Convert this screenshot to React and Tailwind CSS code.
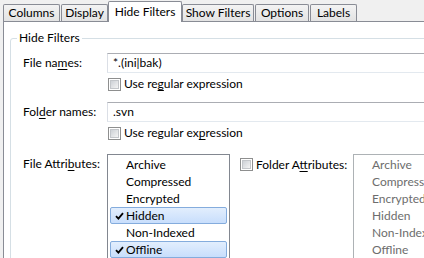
import React from "react";

const tabs = [
	{ name: "Columns", w: "w-[57px]" },
	{ name: "Display", w: "w-[47px]" },
	{ name: "Hide Filters", w: "w-[74px]", active: true },
	{ name: "Show Filters", w: "w-[72px]" },
	{ name: "Options", w: "w-[54px]" },
	{ name: "Labels", w: "w-[47px]" },
];

const attributes = ["Archive", "Compressed", "Encrypted", "Hidden", "Non-Indexed", "Offline"];
const hiddenChecked = ["Hidden", "Offline"];

// Win7 style unchecked checkbox
const CheckBox = () => (
	<div className="w-[13px] h-[13px] border border-[#8e8f8f] bg-white p-[1px] shrink-0">
		<div className="w-full h-full border border-[#c3c6ca] bg-linear-to-br from-[#cdd1d6] to-[#f4f4f4]"></div>
	</div>
);

// label with an underlined access key
const Label = ({ pre, key_, post }) => (
	<span className="whitespace-nowrap">
		{pre}
		<span className="underline underline-offset-2">{key_}</span>
		{post}
	</span>
);

const TextBox = ({ value }) => (
	<div className="w-[330px] h-[20px] border border-[#abadb3] border-l-[#dbdfe6] border-r-[#dbdfe6] border-b-[#e3e9ef] pl-[5px] flex items-center">
		{value}
	</div>
);

const Tick = () => (
	<svg width="9" height="8" viewBox="0 0 9 8" className="shrink-0">
		<path d="M1 4.2 L3.4 6.6 L8 1.2" fill="none" stroke="#000" strokeWidth="1.8" />
	</svg>
);

export default function App() {
	return (
		<div
			className="w-[424px] h-[258px] overflow-hidden bg-[#f0f0f0] text-[12px] text-black flex flex-col"
			style={{ fontFamily: 'Lato, "Noto Sans", sans-serif' }}
		>
			{/* Tab strip */}
			<div className="h-[21px] flex items-end pl-[3px] gap-[1px] shrink-0">
				{tabs.map((t) =>
					t.active ? (
						<div
							key={t.name}
							className={`${t.w} h-[21px] -mb-px relative z-10 bg-white border border-b-0 border-[#898c95] rounded-t-[2px] flex items-start justify-center pt-[2px] leading-[16px] -mx-[1px]`}
						>
							{t.name}
						</div>
					) : (
						<div
							key={t.name}
							className={`${t.w} h-[17px] border border-b-0 border-[#898c95] rounded-t-[2px] bg-linear-to-b from-[#f3f3f3] to-[#e3e3e3] flex items-center justify-center leading-[16px]`}
						>
							{t.name}
						</div>
					)
				)}
			</div>

			{/* Tab panel */}
			<div className="ml-[3px] flex-1 border border-[#898c95] bg-white pl-[6px] pt-[8px] w-[460px]">
				<fieldset className="w-[470px] h-[300px] border border-[#d5dfe5] rounded-[3px] pl-[12px] pt-[7px]">
					<legend className="-ml-[6px] px-[2px] leading-[16px]">Hide Filters</legend>

					<div className="flex items-center h-[20px]">
						<div className="w-[84px]">
							<Label pre="File na" key_="m" post="es:" />
						</div>
						<TextBox value="*.(ini|bak)" />
					</div>

					<div className="flex items-center gap-[3px] h-[14px] mt-[4px] pl-[85px]">
						<CheckBox />
						<Label pre="Use re" key_="g" post="ular expression" />
					</div>

					<div className="flex items-center h-[20px] mt-[11px]">
						<div className="w-[84px]">
							<Label pre="Fol" key_="d" post="er names:" />
						</div>
						<TextBox value=".svn" />
					</div>

					<div className="flex items-center gap-[3px] h-[14px] mt-[4px] pl-[85px]">
						<CheckBox />
						<Label pre="Use regular ex" key_="p" post="ression" />
					</div>

					<div className="flex items-start mt-[14px]">
						<div className="w-[84px] pt-[1px] leading-[17px]">
							<Label pre="File Attri" key_="b" post="utes:" />
						</div>

						<div className="w-[123px] h-[140px] border border-[#828790] pt-[1px] px-[2px]">
							{attributes.map((a) => {
								const on = hiddenChecked.includes(a);
								return (
									<div
										key={a}
										className={`h-[17px] flex items-center rounded-[2px] border ${
											on
												? "border-[#84acdd] bg-linear-to-b from-[#e2eefd] to-[#c8defc]"
												: "border-transparent"
										}`}
									>
										<div className="w-[15px] flex justify-center pl-[1px]">{on && <Tick />}</div>
										<span className="leading-[15px]">{a}</span>
									</div>
								);
							})}
						</div>

						<div className="w-[123px] flex items-center gap-[3px] pl-[10px] mt-[2px] leading-[17px]">
							<CheckBox />
							<Label pre="Folder A" key_="t" post="tributes:" />
						</div>

						<div className="w-[123px] h-[140px] border border-[#adb2b5] pt-[1px] pl-[17px] text-[#6d6d6d]">
							{attributes.map((a) => (
								<div key={a} className="h-[17px] flex items-center border border-transparent">
									{a}
								</div>
							))}
						</div>
					</div>
				</fieldset>
			</div>
		</div>
	);
}
